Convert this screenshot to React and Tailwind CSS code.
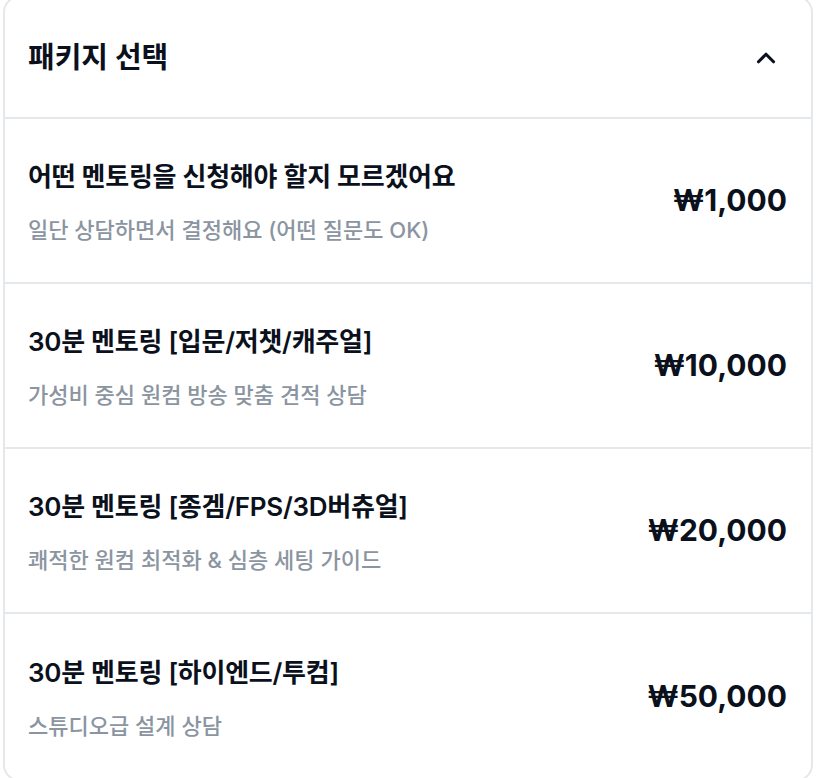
import React from "react";
import { ChevronUp } from "lucide-react";

const packages = [
  {
    title: "어떤 멘토링을 신청해야 할지 모르겠어요",
    desc: "일단 상담하면서 결정해요 (어떤 질문도 OK)",
    price: "₩1,000",
  },
  {
    title: "30분 멘토링 [입문/저챗/캐주얼]",
    desc: "가성비 중심 원컴 방송 맞춤 견적 상담",
    price: "₩10,000",
  },
  {
    title: "30분 멘토링 [종겜/FPS/3D버츄얼]",
    desc: "쾌적한 원컴 최적화 & 심층 세팅 가이드",
    price: "₩20,000",
  },
  {
    title: "30분 멘토링 [하이엔드/투컴]",
    desc: "스튜디오급 설계 상담",
    price: "₩50,000",
  },
];

const App = () => {
  return (
    <div
      className="w-[816px] bg-white"
      style={{ fontFamily: 'Inter, "Noto Sans CJK KR", sans-serif' }}
    >
      <div className="mx-[3px] -mt-[4px] rounded-2xl border-2 border-[#e5e8eb] bg-white overflow-hidden">
        {/* Header */}
        <div className="h-[121px] flex items-center justify-between pl-[23px] pr-[30px] border-b-2 border-[#e5e8eb]">
          <h2 className="text-[29px] font-bold text-[#0b111c]">패키지 선택</h2>
          <ChevronUp size={30} strokeWidth={2.5} className="text-[#0b111c]" />
        </div>

        {/* Package rows */}
        {packages.map((pkg, index) => (
          <div
            key={index}
            className={`h-[165px] flex items-center justify-between pl-[23px] pr-[24px] ${
              index < packages.length - 1 ? "border-b-2 border-[#e5e8eb]" : ""
            }`}
          >
            <div className="flex flex-col gap-[21px] pt-[4px]">
              <div className="text-[26px] leading-[34px] font-semibold tracking-[-0.01em] text-[#0b111c]">
                {pkg.title}
              </div>
              <div className="text-[22px] leading-[30px] font-medium text-[#8b95a1]">
                {pkg.desc}
              </div>
            </div>
            <div className="text-[30px] font-bold text-[#0b111c]">
              {pkg.price}
            </div>
          </div>
        ))}
      </div>
    </div>
  );
};

export default App;
